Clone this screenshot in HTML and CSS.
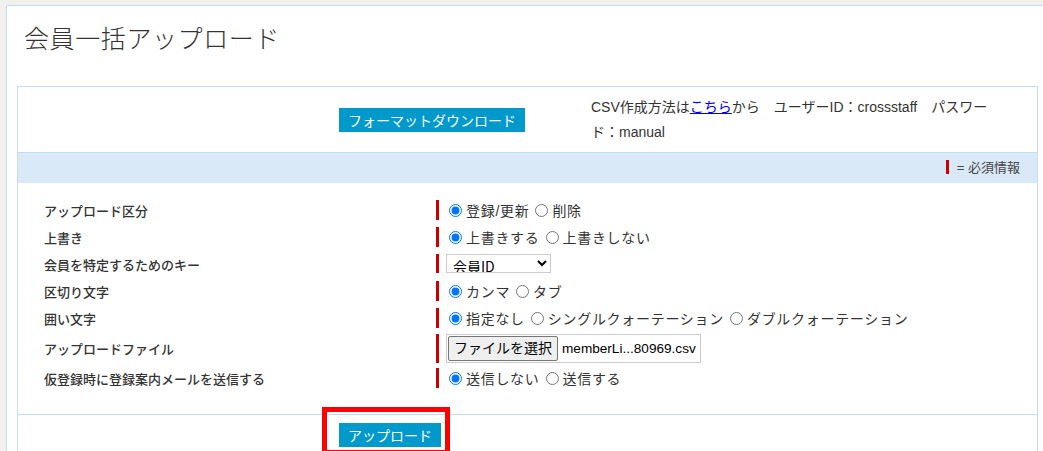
FILE: index.html
```html
<!DOCTYPE html>
<html lang="ja">
<head>
    <meta charset="UTF-8">
    <meta name="viewport" content="width=device-width, initial-scale=1.0">
    <title>会員一括アップロード</title>
    <link rel="stylesheet" href="styles.css">
</head>
<body>

<div class="page">
    <h1 class="title">会員一括アップロード</h1>

    <div class="panel">
        <div class="panel-head">
            <a class="btn" href="#">フォーマットダウンロード</a>
            <p class="note">CSV作成方法は<a href="#">こちら</a>から　ユーザーID：crossstaff　パスワード：manual</p>
        </div>

        <div class="band"><span class="req-mark"></span>= 必須情報</div>

        <div class="rows">
            <div class="row">
                <div class="label">アップロード区分</div>
                <div class="value"><span class="req">
                    <label><input type="radio" name="kubun" checked>登録/更新</label>
                    <label><input type="radio" name="kubun">削除</label>
                </span></div>
            </div>
            <div class="row">
                <div class="label">上書き</div>
                <div class="value"><span class="req">
                    <label><input type="radio" name="overwrite" checked>上書きする</label>
                    <label><input type="radio" name="overwrite">上書きしない</label>
                </span></div>
            </div>
            <div class="row">
                <div class="label">会員を特定するためのキー</div>
                <div class="value"><span class="req">
                    <select class="select">
                        <option>会員ID</option>
                    </select>
                </span></div>
            </div>
            <div class="row">
                <div class="label">区切り文字</div>
                <div class="value"><span class="req">
                    <label><input type="radio" name="sep" checked>カンマ</label>
                    <label><input type="radio" name="sep">タブ</label>
                </span></div>
            </div>
            <div class="row">
                <div class="label">囲い文字</div>
                <div class="value"><span class="req">
                    <label><input type="radio" name="quote" checked>指定なし</label>
                    <label><input type="radio" name="quote">シングルクォーテーション</label>
                    <label><input type="radio" name="quote">ダブルクォーテーション</label>
                </span></div>
            </div>
            <div class="row row-file">
                <div class="label">アップロードファイル</div>
                <div class="value"><span class="req">
                    <span class="file">
                        <span class="file-btn">ファイルを選択</span>
                        <span class="file-name">memberLi...80969.csv</span>
                    </span>
                </span></div>
            </div>
            <div class="row">
                <div class="label">仮登録時に登録案内メールを送信する</div>
                <div class="value"><span class="req">
                    <label><input type="radio" name="mail" checked>送信しない</label>
                    <label><input type="radio" name="mail">送信する</label>
                </span></div>
            </div>
        </div>

        <div class="panel-foot">
            <button class="btn" type="button">アップロード</button>
            <div class="highlight"></div>
        </div>
    </div>
</div>

</body>
</html>
```

FILE: styles.css
```css
body {
    margin: 0;
    background-color: #f1f0ed;
    font-family: "Liberation Sans", "Noto Sans CJK JP", sans-serif;
    color: #333;
    overflow: hidden;
}
.page {
    margin: 5px 0 0 6px;
    padding: 0 5px 0 10px;
    background: white;
    border-top: 1px solid #c6dcf2;
    border-left: 1px solid #c6dcf2;
    height: 460px;
}
.title {
    margin: 0;
    padding: 13px 0 0 7px;
    height: 67px;
    font-family: "Noto Sans CJK JP", sans-serif;
    font-size: 25px;
    font-weight: 300;
    letter-spacing: 0.6px;
    color: #333;
}
.panel {
    border: 1px solid #c6dcf2;
    border-bottom: none;
}
.btn {
    display: inline-block;
    background: #0099cc;
    color: white;
    border: none;
    padding: 0 9px;
    height: 24px;
    line-height: 24px;
    font-family: "Noto Sans CJK JP", sans-serif;
    font-size: 14px;
    text-decoration: none;
    cursor: pointer;
}
.panel-head {
    display: flex;
    align-items: center;
    height: 65px;
    padding-left: 321px;
    border-bottom: 1px solid #c6dcf2;
}
.note {
    margin: 0 0 0 66px;
    width: 418px;
    font-size: 14px;
    line-height: 25px;
}
.note a {
    color: #0000ee;
}
.band {
    background: #dae9f8;
    height: 30px;
    line-height: 30px;
    text-align: right;
    padding-right: 17px;
    font-size: 13px;
    color: #444;
}
.req-mark {
    display: inline-block;
    width: 3px;
    height: 14px;
    background: #cc0000;
    vertical-align: -2px;
    margin-right: 8px;
}
.rows {
    padding: 14px 0 22px;
    border-bottom: 1px solid #c6dcf2;
}
.row {
    display: grid;
    grid-template-columns: 418px 1fr;
    align-items: center;
    height: 27px;
}
.row-file {
    height: 33px;
}
.label {
    padding-left: 26px;
    font-family: "Noto Sans CJK JP", sans-serif;
    font-size: 13px;
    font-weight: 500;
    color: #333;
}
.req {
    display: inline-flex;
    align-items: center;
    border-left: 3px solid #cc0000;
    padding-left: 7px;
    min-height: 17px;
    font-size: 14px;
    letter-spacing: 0.7px;
}
.req label {
    display: inline-flex;
    align-items: center;
    margin-right: 3px;
}
.req input[type="radio"] {
    margin: 0 4px 0 3px;
    width: 13px;
    height: 13px;
}
.select {
    margin-left: 0;
    width: 105px;
    height: 19px;
    font-size: 14px;
    font-family: "Noto Sans CJK JP", sans-serif;
    border: 1px solid #ccc;
    background: white;
    color: #000;
    padding: 0 2px;
}
.file {
    display: inline-flex;
    align-items: center;
    border: 1px solid #ccc;
    height: 27px;
    padding-right: 4px;
    letter-spacing: 0;
}
.file-btn {
    display: inline-block;
    height: 23px;
    line-height: 23px;
    padding: 0 5px;
    margin-left: 1px;
    background: #efefef;
    border: 1px solid #767676;
    border-radius: 2px;
    color: #000;
    font-size: 14px;
}
.file-name {
    margin-left: 4px;
    color: #000;
    font-size: 13.6px;
}
.panel-foot {
    position: relative;
    padding: 8px 0 0 321px;
    height: 40px;
}
.highlight {
    position: absolute;
    left: 304px;
    top: -8px;
    width: 128px;
    height: 48px;
    box-sizing: border-box;
    border: 5px solid #ff0000;
}
```
